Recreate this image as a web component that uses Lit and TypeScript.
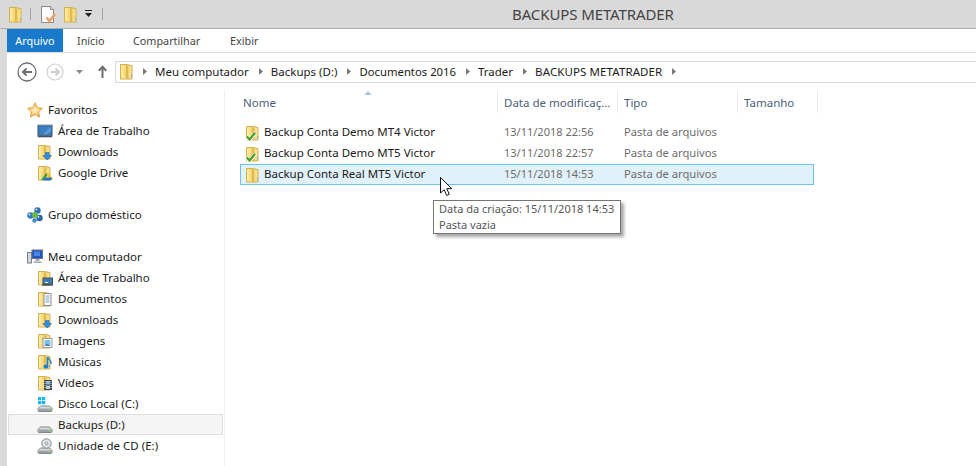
import { LitElement, html, css, svg } from "lit";
import { customElement } from "lit/decorators.js";

const folderBase = svg`
  <defs>
    <linearGradient id="fl" x1="0" x2="1" y1="0" y2="0"><stop offset="0" stop-color="#fdeeaa"/><stop offset="1" stop-color="#f3d26e"/></linearGradient>
    <linearGradient id="fr" x1="0" x2="1" y1="0" y2="0"><stop offset="0" stop-color="#e8c050"/><stop offset="1" stop-color="#f9e596"/></linearGradient>
  </defs>
  <path d="M1.500 1.500h6l5.500 1v12.500H1.500z" fill="url(#fr)" stroke="#d3b04f"/>
  <path d="M2 2h5.200v12.500H2z" fill="url(#fl)"/>
  <path d="M7 1.500l2.200 1.500v12.500l-2.200-1z" fill="#e0ba4e"/>
  <path d="M12.500 11v2.500" stroke="#7fb0d8"/>
`;

const overlays: Record<string, unknown> = {
  plain: svg``,
  check: svg`<path d="M1.500 11.500l3 3.500 6-7.500" fill="none" stroke="#fff" stroke-width="3.600"/><path d="M1.800 11.500l2.800 3 5.500-6.800" fill="none" stroke="#4a9c2c" stroke-width="2.200"/>`,
  down: svg`<path d="M8.500 8.500h3.500v3h2.500l-4.300 4.500-4.200-4.500h2.500z" fill="#2f8fe0" stroke="#1968b4" stroke-width=".6"/>`,
  drive: svg`<path d="M9 8l-5 7h3l4-6z" fill="#2f9e44"/><path d="M9 8h3l4 7h-3z" fill="#f5c518"/><path d="M6.500 15.500l1.800-3h7l-1.500 3z" fill="#2e6fd8"/>`,
  desk: svg`<rect x="6" y="8" width="9.500" height="6" fill="#3b7fb6" stroke="#47505a"/><path d="M8 12.500h3" stroke="#fff"/><rect x="5" y="14.300" width="11" height="1.300" fill="#2b3a46"/>`,
  docs: svg`<rect x="7" y="2.500" width="7" height="12" fill="#fff" stroke="#8c8c8c"/><path d="M8.500 5h4M8.500 7h4M8.500 9h4M8.500 11h4" stroke="#7aa0c4"/>`,
  pics: svg`<rect x="6" y="5.500" width="9" height="9" fill="#fff" stroke="#9a9a9a"/><rect x="7.500" y="7" width="6" height="6" fill="#7ec0e6"/><path d="M7.500 13l2.500-2.500 3.500 2.500z" fill="#4d86a8"/>`,
  music: svg`<path d="M10.500 3v9" stroke="#1c7fd0" stroke-width="1.600"/><path d="M11 3c.5 3 3.500 3 3 7" fill="none" stroke="#1c7fd0" stroke-width="1.300"/><ellipse cx="9" cy="12.500" rx="2.500" ry="2" fill="#1c7fd0"/>`,
  video: svg`<rect x="7" y="5" width="8" height="10" fill="#3c4650"/><rect x="9" y="6" width="4" height="3.500" fill="#8fb9d6"/><rect x="9" y="10.500" width="4" height="3.500" fill="#b9cfdc"/><path d="M8 6v8M14 6v8" stroke="#e8e8e8" stroke-dasharray="1 1"/>`,
};

const folder = (o = "plain") => html`<svg class="ic" viewBox="0 0 16 16">${folderBase}${overlays[o]}</svg>`;

const driveBody = svg`
  <path d="M3.500 10h9l2.500 2.500v2a1 1 0 0 1-1 1H2a1 1 0 0 1-1-1v-2z" fill="#d9dcdf" stroke="#7f868c"/>
  <path d="M1.500 12.500h13v2.500h-13z" fill="#9aa2a8"/>
  <rect x="11.500" y="13" width="2" height="1.200" fill="#7fe04a"/>
`;

const icons = {
  star: html`<svg class="ic" viewBox="0 0 16 16"><defs><radialGradient id="st"><stop offset="0" stop-color="#fff4c8"/><stop offset="1" stop-color="#f8b858"/></radialGradient></defs><path d="M8 .8l2.200 4.900 5.200.6-3.900 3.500 1.100 5.300L8 12.400l-4.600 2.700 1.100-5.300L.6 6.300l5.200-.6z" fill="url(#st)" stroke="#e39a3a"/></svg>`,
  desktop: html`<svg class="ic" viewBox="0 0 16 16"><rect x=".5" y="2" width="15" height="11" fill="#34679e" stroke="#98a4b0"/><path d="M2 3.500h12v8H2z" fill="#3f7fc2"/><path d="M6 11.500l8-8v4l-4 4z" fill="#5c9bd8"/><rect x="1" y="12.500" width="14" height="1.800" fill="#46525c"/></svg>`,
  home: html`<svg class="ic" viewBox="0 0 16 16"><circle cx="10.500" cy="3.500" r="3.200" fill="#2a72b5"/><circle cx="3.500" cy="8.500" r="3.200" fill="#2f7cc0"/><circle cx="12.500" cy="11" r="3.200" fill="#2a66a8"/><circle cx="8" cy="8" r="3" fill="#6ab845"/><circle cx="7.500" cy="13.500" r="2.200" fill="#3d8ac6"/><circle cx="9.500" cy="2.500" r="1" fill="#bfe0f5"/><circle cx="2.500" cy="7.500" r="1" fill="#bfe0f5"/><circle cx="11.500" cy="10" r="1" fill="#bfe0f5"/></svg>`,
  computer: html`<svg class="ic" viewBox="0 0 16 16"><rect x=".5" y="3.500" width="4" height="10.500" fill="#d4d8db" stroke="#7a8288"/><rect x="5" y="1" width="10.500" height="8.500" fill="#2255c4" stroke="#6a747c"/><path d="M7 2.500h6v4.500H7z" fill="#4a86ea"/><path d="M8.500 10h4v2h-4zM6.500 12.500h8v1.500h-8z" fill="#a3abb1"/></svg>`,
  diskC: html`<svg class="ic" viewBox="0 0 16 16">${driveBody}<path d="M1 1h3.300v3.300H1zM5 1h3.300v3.300H5zM1 5h3.300v3.300H1zM5 5h3.300v3.300H5z" fill="#19b4ee"/></svg>`,
  diskD: html`<svg class="ic" viewBox="0 0 16 16">${driveBody}</svg>`,
  diskE: html`<svg class="ic" viewBox="0 0 16 16">${driveBody}<circle cx="9.500" cy="5.500" r="4.700" fill="#dfe3e6" stroke="#7f868c"/><circle cx="9.500" cy="5.500" r="1.300" fill="#fff" stroke="#7f868c"/></svg>`,
  doc: html`<svg class="qa-doc" viewBox="0 0 15 17"><path d="M.5.500h9l3 3v13H.5z" fill="#fcfcfc" stroke="#8a8a8a"/><path d="M9.500.500v3h3" fill="#e8e8e8" stroke="#8a8a8a"/><path d="M5.500 11.500l3 3.500 5.500-7" fill="none" stroke="#eba265" stroke-width="2.600"/></svg>`,
  big: html`<svg class="big" viewBox="0 0 14 16" preserveAspectRatio="none">${folderBase}</svg>`,
};

type Item = { label: string; icon: unknown; child?: boolean; sel?: boolean; gapBefore?: boolean };

const nav: Item[] = [
  { label: "Favoritos", icon: icons.star },
  { label: "Área de Trabalho", icon: icons.desktop, child: true },
  { label: "Downloads", icon: folder("down"), child: true },
  { label: "Google Drive", icon: folder("drive"), child: true },
  { label: "Grupo doméstico", icon: icons.home, gapBefore: true },
  { label: "Meu computador", icon: icons.computer, gapBefore: true },
  { label: "Área de Trabalho", icon: folder("desk"), child: true },
  { label: "Documentos", icon: folder("docs"), child: true },
  { label: "Downloads", icon: folder("down"), child: true },
  { label: "Imagens", icon: folder("pics"), child: true },
  { label: "Músicas", icon: folder("music"), child: true },
  { label: "Vídeos", icon: folder("video"), child: true },
  { label: "Disco Local (C:)", icon: icons.diskC, child: true },
  { label: "Backups (D:)", icon: icons.diskD, child: true, sel: true },
  { label: "Unidade de CD (E:)", icon: icons.diskE, child: true },
];

const files = [
  { name: "Backup Conta Demo MT4 Victor", date: "13/11/2018 22:56", o: "check" },
  { name: "Backup Conta Demo MT5 Victor", date: "13/11/2018 22:57", o: "check" },
  { name: "Backup Conta Real MT5 Victor", date: "15/11/2018 14:53", o: "plain", sel: true },
];

const crumbs = [
  { t: "Meu computador", k: "" },
  { t: "Backups (D:)", k: "" },
  { t: "Documentos 2016", k: "nums" },
  { t: "Trader", k: "" },
  { t: "BACKUPS METATRADER", k: "caps" },
];
const tabs = ["Início", "Compartilhar", "Exibir"];

@customElement("app-root")
export class AppRoot extends LitElement {
  static styles = css`
    :host {
      display: block;
      width: 976px;
      height: 466px;
      overflow: hidden;
      position: relative;
      background: #fff;
      font-family: "Noto Sans", "Open Sans", sans-serif;
      font-size: 11.5px;
      color: #1a1a1a;
    }
    svg { display: block; flex: none; }
    .ic { width: 16px; height: 16px; }
    .big { width: 14px; height: 17px; }
    .qa-doc { width: 15px; height: 17px; }
    .title {
      height: 28px;
      background: #d9d9d9;
      border-bottom: 1px solid #ababab;
      display: flex;
      align-items: center;
      position: relative;
    }
    .qa { display: flex; align-items: center; padding-left: 8px; }
    .qsep { width: 1px; height: 12px; background: #a3a3a3; }
    .s1 { margin: 0 10px 0 8px; }
    .s2 { margin-left: 10px; }
    .qa-doc { margin-right: 7px; }
    .drop { margin-left: 8px; width: 7px; height: 8px; }
    .ttext {
      margin-left: 409px;
      font-size: 15px;
      color: #444;
      letter-spacing: -0.1px;
      white-space: nowrap;
    }
    .win { display: flex; height: 437px; background: #d9d9d9; }
    .content { margin-left: 7px; flex: 1; background: #fff; display: flex; flex-direction: column; min-width: 0; }
    .tabs { display: flex; height: 23px; border-bottom: 1px solid #dadada; }
    .tab { display: flex; align-items: center; color: #444; font-size: 10.8px; }
    .tab.file { width: 56px; justify-content: center; background: #1979ca; color: #fff; margin-right: 14px; }
    .tab.t1 { width: 56px; }
    .tab.t2 { width: 97px; }
    .addr { height: 37px; display: flex; align-items: center; }
    .navs { display: flex; align-items: center; width: 108px; flex: none; }
    .back { margin-left: 10px; width: 20px; height: 20px; }
    .fwd { margin-left: 9px; width: 18px; height: 18px; }
    .tri { margin-left: 12px; width: 7px; height: 4px; }
    .up { margin-left: 15px; width: 9px; height: 13px; }
    .box {
      flex: 1;
      height: 22px;
      box-sizing: border-box;
      border: 1px solid #d9d9d9;
      border-right: none;
      display: flex;
      align-items: center;
      padding-left: 3px;
      gap: 8px;
    }
    .box .big { margin-right: 2px; }
    .arr { width: 4px; height: 7px; }
    .crumb { white-space: nowrap; color: #1a1a1a; margin-right: 2px; }
    .crumb.nums { font-size: 11.3px; }
    .crumb.caps { letter-spacing: 0.1px; }
    .main { flex: 1; display: flex; min-height: 0; }
    .side {
      width: 217px;
      flex: none;
      padding-top: 9px;
      box-sizing: content-box;
      border-right: 1px solid #f0f0f0;
    }
    .nav {
      height: 21px;
      display: flex;
      align-items: center;
      gap: 5px;
      padding-left: 20px;
      box-sizing: border-box;
      white-space: nowrap;
      color: #1a1a1a;
    }
    .nav.child { padding-left: 30px; }
    .nav.gap { margin-top: 21px; }
    .nav.sel {
      background: #f5f5f5;
      box-shadow: inset 0 0 0 1px #dedede;
      margin: 0 1px 0 1px;
      padding-left: 29px;
    }
    .list { flex: 1; padding-left: 15px; min-width: 0; position: relative; }
    .head { display: flex; height: 32px; position: relative; }
    .sort { position: absolute; left: 124px; top: 1px; width: 8px; height: 4px; }
    .h {
      height: 18px;
      box-sizing: content-box;
      padding-left: 6px;
      padding-top: 5px;
      color: #4c607a;
      border-right: 1px solid #ebebeb;
      white-space: nowrap;
    }
    .h.n { width: 251px; padding-left: 3px; padding-right: 3px; }
    .h.d, .h.t { width: 113px; }
    .h.s { width: 73px; }
    .row {
      width: 574px;
      height: 21px;
      box-sizing: border-box;
      border: 1px solid transparent;
      display: grid;
      grid-template-columns: 257px 120px 1fr;
      align-items: center;
      color: #6d6d6d;
    }
    .row.sel { background: #e1f1f9; border-color: #6fc0ea; }
    .name { display: flex; align-items: center; gap: 3px; padding-left: 4px; color: #1a1a1a; white-space: nowrap; }
    .name span { padding-bottom: 2px; }
    .c { padding-left: 6px; padding-bottom: 2px; white-space: nowrap; }
    .c.date { font-size: 11px; }
    .c.type { font-size: 11.2px; }
    .tip {
      position: absolute;
      left: 433px;
      top: 200px;
      width: 188px;
      height: 34px;
      box-sizing: border-box;
      border: 1px solid #767676;
      background: #fff;
      box-shadow: 3px 3px 3px rgba(0,0,0,.35);
      color: #575757;
      padding: 0 0 0 5px;
      line-height: 16px;
      white-space: nowrap;
      font-size: 11px;
    }
    .cursor { position: absolute; left: 440px; top: 177px; width: 13px; height: 20px; }
  `;

  render() {
    return html`
      <div class="title">
        <div class="qa">
          ${icons.big}
          <span class="qsep s1"></span>
          ${icons.doc}
          ${icons.big}
          <svg class="drop" viewBox="0 0 7 8"><path d="M0 0h7v1H0z" fill="#222"/><path d="M0 3h7L3.500 7z" fill="#222"/></svg>
          <span class="qsep s2"></span>
        </div>
        <div class="ttext">BACKUPS METATRADER</div>
      </div>
      <div class="win">
        <div class="content">
          <div class="tabs">
            <div class="tab file">Arquivo</div>
            <div class="tab t1">${tabs[0]}</div>
            <div class="tab t2">${tabs[1]}</div>
            <div class="tab">${tabs[2]}</div>
          </div>
          <div class="addr">
            <div class="navs">
              <svg class="back" viewBox="0 0 20 20"><circle cx="10" cy="10" r="9" fill="#fff" stroke="#6e6e6e" stroke-width="1.300"/><path d="M15 10H6M9.500 6.500L6 10l3.500 3.500" fill="none" stroke="#6e6e6e" stroke-width="2"/></svg>
              <svg class="fwd" viewBox="0 0 18 18"><circle cx="9" cy="9" r="8" fill="#fff" stroke="#cfcfcf" stroke-width="1.200"/><path d="M4.500 9H13M9.500 5.500L13 9l-3.500 3.500" fill="none" stroke="#cfcfcf" stroke-width="2"/></svg>
              <svg class="tri" viewBox="0 0 7 4"><path d="M0 0h7L3.500 4z" fill="#8a8a8a"/></svg>
              <svg class="up" viewBox="0 0 9 13"><path d="M4.500 13V2M.8 5.800l3.700-4 3.700 4" fill="none" stroke="#6e6e6e" stroke-width="2"/></svg>
            </div>
            <div class="box">
              ${icons.big}
              <svg class="arr" viewBox="0 0 4 7"><path d="M0 0l4 3.500L0 7z" fill="#7a7a7a"/></svg>
              ${crumbs.map(c => html`<span class="crumb ${c.k}">${c.t}</span><svg class="arr" viewBox="0 0 4 7"><path d="M0 0l4 3.500L0 7z" fill="#7a7a7a"/></svg>`)}
            </div>
          </div>
          <div class="main">
            <div class="side">
              ${nav.map(n => html`<div class="nav ${n.child ? "child" : ""} ${n.sel ? "sel" : ""} ${n.gapBefore ? "gap" : ""}">${n.icon}<span>${n.label}</span></div>`)}
            </div>
            <div class="list">
              <div class="head">
                <svg class="sort" viewBox="0 0 8 4"><path d="M4 0l4 4H0z" fill="#a9c4de"/></svg>
                <div class="h n">Nome</div>
                <div class="h d">Data de modificaç...</div>
                <div class="h t">Tipo</div>
                <div class="h s">Tamanho</div>
              </div>
              ${files.map(f => html`<div class="row ${f.sel ? "sel" : ""}">
                <div class="name">${folder(f.o)}<span>${f.name}</span></div>
                <div class="c date">${f.date}</div>
                <div class="c type">Pasta de arquivos</div>
              </div>`)}
            </div>
          </div>
        </div>
      </div>
      <div class="tip">Data da criação: 15/11/2018 14:53<br />Pasta vazia</div>
      <svg class="cursor" viewBox="0 0 13 20"><path d="M.5.500v15.500l3.700-3.300 2.500 5.800 2.600-1.200-2.500-5.600h5z" fill="#fff" stroke="#111"/></svg>
    `;
  }
}
